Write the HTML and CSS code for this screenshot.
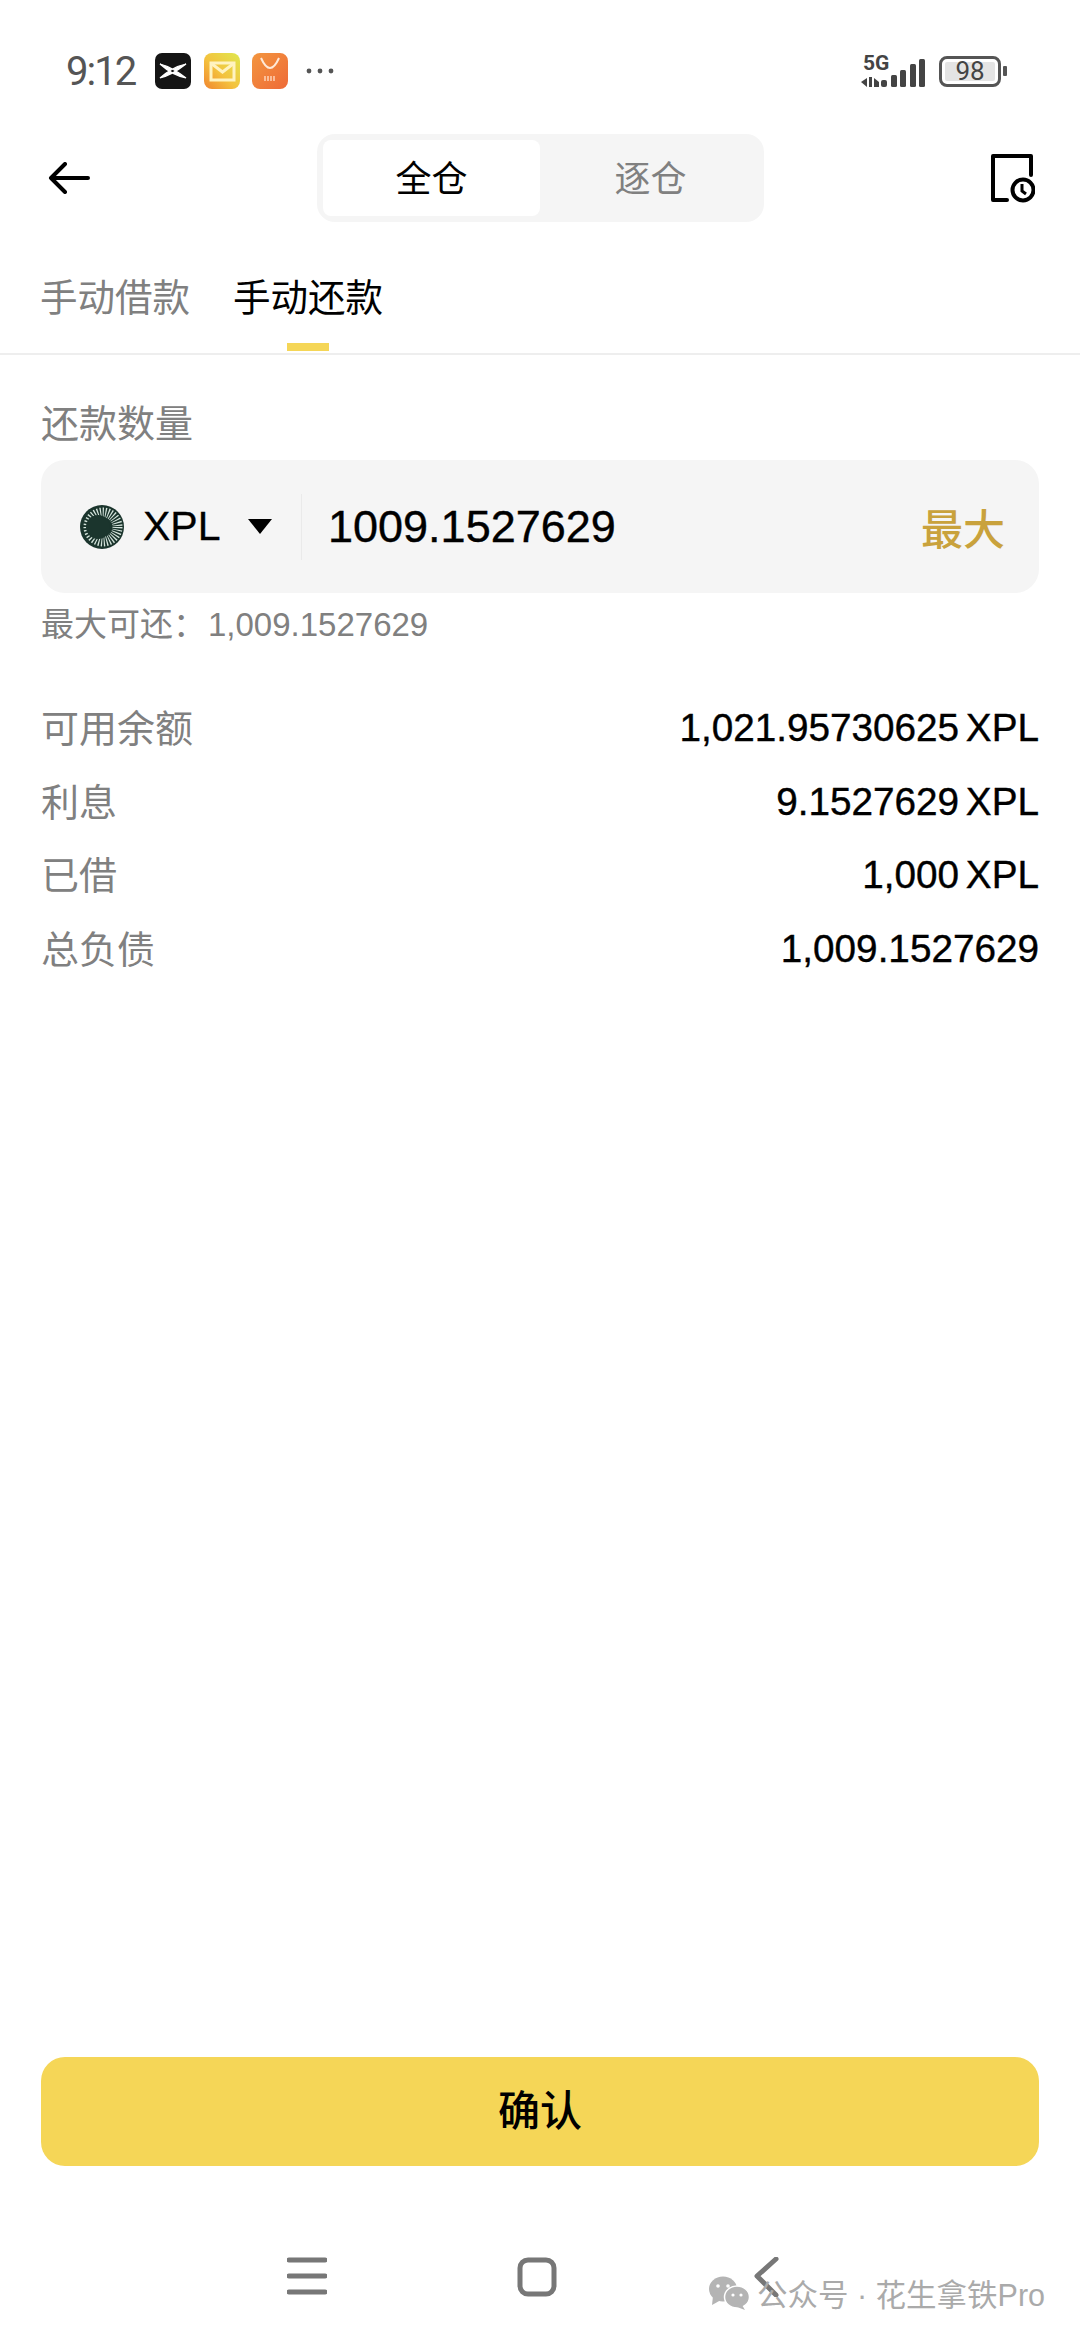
FILE: index.html
```html
<!DOCTYPE html>
<html lang="zh-CN">
<head>
    <meta charset="UTF-8">
    <meta name="viewport" content="width=device-width, initial-scale=1.0">
    <title>手动还款</title>
    <link rel="stylesheet" href="styles.css">
</head>
<body>

    <div class="page">
        <!-- status bar -->
        <div class="status">
            <span class="time">9:12</span>
            <svg class="app-icon" viewBox="0 0 36 36">
                <rect width="36" height="36" rx="7" fill="#151515"/>
                <path d="M5 11 Q17 14 31 25 Q17 22 5 11Z M5 25 Q17 22 31 11 Q17 14 5 25Z" fill="#fff" stroke="#fff" stroke-width="1.2"/>
            </svg>
            <svg class="app-icon" viewBox="0 0 36 36">
                <defs>
                    <linearGradient id="mailBg" x1="1" y1="0" x2="0" y2="1">
                        <stop offset="0" stop-color="#dfe84f"/>
                        <stop offset="0.55" stop-color="#f4c23e"/>
                        <stop offset="1" stop-color="#f0852f"/>
                    </linearGradient>
                </defs>
                <rect width="36" height="36" rx="8" fill="url(#mailBg)"/>
                <rect x="7" y="10" width="23" height="17" fill="none" stroke="#fff3c0" stroke-width="3"/>
                <path d="M8 11 L18.5 19 L29 11" fill="none" stroke="#fff3c0" stroke-width="3"/>
            </svg>
            <svg class="app-icon" viewBox="0 0 36 36">
                <defs>
                    <linearGradient id="shopBg" x1="0" y1="0" x2="1" y2="1">
                        <stop offset="0" stop-color="#f3963f"/>
                        <stop offset="1" stop-color="#ee6a38"/>
                    </linearGradient>
                </defs>
                <rect width="36" height="36" rx="8" fill="url(#shopBg)"/>
                <path d="M9 5 Q18 25 27 5" fill="none" stroke="#ffe9d8" stroke-width="2"/>
                <path d="M13 23 V28 M16 23 V28 M19 23 V28 M22 23 V28" stroke="#ffd9c0" stroke-width="1.4"/>
            </svg>
            <svg class="more-dots" viewBox="0 0 28 6">
                <circle cx="3" cy="3" r="2.4"/>
                <circle cx="14" cy="3" r="2.4"/>
                <circle cx="25" cy="3" r="2.4"/>
            </svg>
            <div class="status-right">
                <svg class="signal" viewBox="0 -6 64 40">
                    <text x="2" y="16" class="signal-text">5G</text>
                    <path d="M0 28 L6 24 V33 Z M8 23 V33 H11 V23Z M13 24 L18 28 V33 H13Z"/>
                    <rect x="20" y="26" width="6" height="7" rx="2"/>
                    <rect x="30" y="21" width="6" height="12" rx="1.5"/>
                    <rect x="39" y="16" width="6" height="17" rx="1.5"/>
                    <rect x="49" y="10" width="6" height="23" rx="1.5"/>
                    <rect x="58" y="5" width="6" height="28" rx="1.5"/>
                </svg>
                <div class="battery">
                    <div class="battery-body"><span class="battery-fill">98</span></div>
                    <div class="battery-nub"></div>
                </div>
            </div>
        </div>

        <!-- header -->
        <div class="header">
            <svg class="back" viewBox="0 0 42 32">
                <path d="M40 16 H3 M17 2 L3 16 L17 30" fill="none" stroke="#000" stroke-width="4" stroke-linecap="round" stroke-linejoin="round"/>
            </svg>
            <div class="segment">
                <div class="segment-item active">全仓</div>
                <div class="segment-item">逐仓</div>
            </div>
            <svg class="history" viewBox="0 0 44 50">
                <path d="M16 47 H2 V3 H40 V22" fill="none" stroke="#000" stroke-width="4" stroke-linejoin="round" stroke-linecap="round"/>
                <circle cx="32" cy="37" r="10.5" fill="#fff" stroke="#000" stroke-width="4"/>
                <path d="M31 31 V38 L35 41" fill="none" stroke="#000" stroke-width="3"/>
            </svg>
        </div>

        <!-- tabs -->
        <div class="tabs">
            <div class="tab">手动借款</div>
            <div class="tab active">手动还款</div>
        </div>

        <!-- form -->
        <div class="content">
            <div class="field-label">还款数量</div>
            <div class="amount-box">
                <svg class="coin" viewBox="0 0 44 44">
                    <circle cx="22" cy="22" r="22" fill="#1b352d"/>
                    <circle cx="23" cy="22" r="14.5" fill="none" stroke="#d5e4dc" stroke-width="10" stroke-dasharray="1.1 1.5"/>
                    <circle cx="18" cy="22" r="12" fill="#1b352d"/>
                </svg>
                <span class="coin-name">XPL</span>
                <svg class="caret" viewBox="0 0 24 15">
                    <path d="M0 0 H24 L12 15Z" fill="#000"/>
                </svg>
                <div class="amount-divider"></div>
                <span class="amount-value">1009.1527629</span>
                <span class="amount-max">最大</span>
            </div>
            <div class="hint">最大可还：<span class="hint-num">1,009.1527629</span></div>

            <div class="info-list">
                <div class="info-row"><span class="info-key">可用余额</span><span class="info-val">1,021.95730625 XPL</span></div>
                <div class="info-row"><span class="info-key">利息</span><span class="info-val">9.1527629 XPL</span></div>
                <div class="info-row"><span class="info-key">已借</span><span class="info-val">1,000 XPL</span></div>
                <div class="info-row"><span class="info-key">总负债</span><span class="info-val">1,009.1527629</span></div>
            </div>
        </div>

        <button class="confirm-btn">确认</button>

        <!-- android nav -->
        <div class="nav">
            <svg class="nav-icon" viewBox="0 0 40 40">
                <path d="M2 3 H38 M2 19 H38 M2 35 H38" stroke="#777" stroke-width="5" stroke-linecap="round"/>
            </svg>
            <svg class="nav-icon" viewBox="0 0 40 40">
                <rect x="3" y="3" width="34" height="34" rx="8" fill="none" stroke="#777" stroke-width="5"/>
            </svg>
            <svg class="nav-icon" viewBox="0 0 40 40">
                <path d="M29 2 L10 19 L29 38" fill="none" stroke="#777" stroke-width="5" stroke-linecap="round" stroke-linejoin="round"/>
            </svg>
        </div>

        <!-- watermark over the nav bar -->
        <div class="watermark">
            <svg class="wechat" viewBox="0 0 42 34">
                <ellipse cx="15" cy="13" rx="14" ry="12.5" fill="#b4b4b4"/>
                <path d="M5 20 L4 29 L13 24Z" fill="#b4b4b4"/>
                <ellipse cx="29" cy="21" rx="12.5" ry="11" fill="#b4b4b4" stroke="#fff" stroke-width="1.5"/>
                <path d="M34 29 L37 34 L29 31Z" fill="#b4b4b4"/>
                <circle cx="10" cy="10" r="1.8" fill="#fff"/>
                <circle cx="20" cy="10" r="1.8" fill="#fff"/>
                <circle cx="25" cy="19" r="1.6" fill="#fff"/>
                <circle cx="33" cy="19" r="1.6" fill="#fff"/>
            </svg>
            <span class="watermark-text">公众号 · 花生拿铁Pro</span>
        </div>
    </div>

</body>
</html>
```

FILE: styles.css
```css
* {
    margin: 0;
    padding: 0;
    box-sizing: border-box;
    font-family: "Liberation Sans", "Noto Sans CJK SC", sans-serif;
}

body {
    background: #fff;
}

.page {
    position: relative;
    display: flex;
    flex-direction: column;
    height: 2339px;
    overflow: hidden;
}

/* status bar */
.status {
    display: flex;
    align-items: center;
    height: 134px;
    padding: 8px 0 0 66px;
}

.time {
    width: 89px;
    font-family: Roboto, sans-serif;
    font-size: 40px;
    letter-spacing: -2px;
    color: #555;
}

.app-icon {
    width: 36px;
    height: 36px;
    margin-right: 12.5px;
}

.more-dots {
    width: 28px;
    height: 6px;
    margin-left: 5px;
    fill: #555;
}

.status-right {
    display: flex;
    align-items: center;
    gap: 14px;
    margin-left: auto;
    margin-right: 73px;
}

.signal {
    width: 64px;
    height: 40px;
    margin-bottom: 6px;
    fill: #444;
}

.signal-text {
    font-family: Roboto, sans-serif;
    font-size: 21px;
    font-weight: 700;
}

.battery {
    display: flex;
    align-items: center;
    gap: 2px;
}

.battery-body {
    width: 62px;
    height: 31px;
    padding: 3px;
    border: 3px solid #555;
    border-radius: 8px;
}

.battery-fill {
    display: block;
    width: 50px;
    height: 19px;
    background: #e4e4e4;
    border-radius: 2px;
    text-align: center;
    font-family: Roboto, sans-serif;
    font-size: 26px;
    line-height: 19px;
    color: #444;
}

.battery-nub {
    width: 4px;
    height: 10px;
    background: #555;
    border-radius: 1px;
}

/* header */
.header {
    display: flex;
    align-items: center;
    justify-content: space-between;
    height: 88px;
    padding: 0 45px 0 48px;
}

.back {
    width: 42px;
    height: 32px;
}

.history {
    width: 44px;
    height: 50px;
}

.segment {
    display: flex;
    width: 447px;
    height: 88px;
    padding: 6px 3px 6px 6px;
    background: #f5f5f5;
    border-radius: 18px;
}

.segment-item {
    flex: 1;
    display: flex;
    align-items: center;
    justify-content: center;
    padding-bottom: 4px;
    font-size: 36px;
    color: #808080;
}

.segment-item.active {
    flex: none;
    width: 217px;
    background: #fff;
    border-radius: 8px;
    color: #000;
}

/* tabs */
.tabs {
    display: flex;
    gap: 43px;
    padding: 0 40px;
    border-bottom: 2px solid #eee;
}

.tab {
    position: relative;
    padding: 54px 0 33px;
    font-size: 37.5px;
    line-height: 44px;
    color: #808080;
}

.tab.active {
    color: #000;
}

.tab.active::after {
    content: "";
    position: absolute;
    left: 54px;
    bottom: 2px;
    width: 42px;
    height: 8px;
    background: #f5d657;
}

/* repay form */
.content {
    flex: 1;
    padding: 47px 41px 0;
}

.field-label {
    font-size: 38px;
    line-height: 44px;
    color: #808080;
}

.amount-box {
    display: flex;
    align-items: center;
    height: 133px;
    margin-top: 14px;
    padding: 0 34px 0 39px;
    background: #f5f5f5;
    border-radius: 24px;
}

.coin {
    width: 44px;
    height: 44px;
    margin-right: 19px;
}

.coin-name {
    width: 76px;
    font-size: 41px;
    color: #000;
    -webkit-text-stroke: 0.3px #000;
}

.caret {
    width: 24px;
    height: 15px;
    margin-left: 29px;
}

.amount-divider {
    width: 1px;
    height: 66px;
    margin: 0 26px 0 29px;
    background: #eaeaea;
}

.amount-value {
    font-size: 45px;
    color: #000;
    -webkit-text-stroke: 0.4px #000;
}

.amount-max {
    margin-left: auto;
    font-size: 42px;
    font-weight: 500;
    color: #c9a23c;
}

.hint {
    margin-top: 11px;
    font-size: 33px;
    line-height: 42px;
    color: #808080;
}

.hint-num {
    margin-left: 2px;
    font-size: 33px;
}

.info-list {
    margin-top: 45px;
}

.info-row {
    display: flex;
    align-items: center;
    justify-content: space-between;
    height: 73.7px;
}

.info-key {
    padding-bottom: 5px;
    font-size: 38px;
    color: #808080;
}

.info-val {
    font-size: 38.7px;
    word-spacing: -4px;
    color: #000;
    -webkit-text-stroke: 0.4px #000;
}

/* bottom */
.confirm-btn {
    height: 109px;
    margin: 0 41px;
    padding-bottom: 8px;
    background: #f5d657;
    border: none;
    border-radius: 24px;
    font-size: 42px;
    font-weight: 500;
    color: #000;
}

.nav {
    display: flex;
    gap: 190px;
    height: 173px;
    padding: 91px 0 0 287px;
}

.nav-icon {
    width: 40px;
    height: 40px;
}

.watermark {
    position: absolute;
    left: 708px;
    top: 2271px;
    display: flex;
    align-items: center;
    gap: 7px;
}

.wechat {
    width: 42px;
    height: 34px;
}

.watermark-text {
    font-size: 30.5px;
    color: #aaa;
    white-space: nowrap;
}
```
